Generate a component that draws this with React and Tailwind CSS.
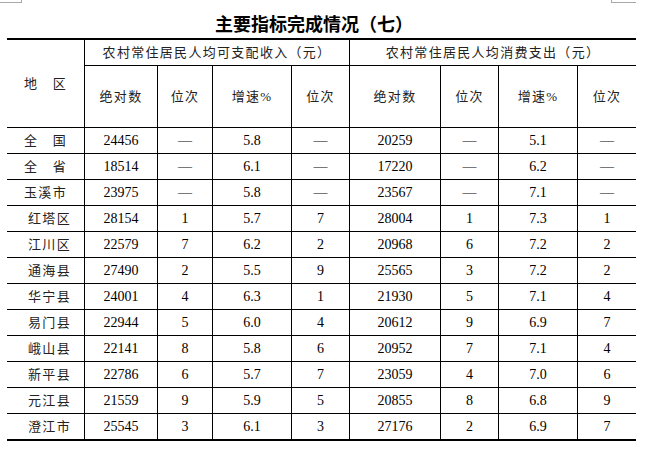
import React from 'react';

const cjk = "font-['Liberation_Serif','Noto_Sans_CJK_SC',serif]";

const rows = [
  ['全　国', '24456', '—', '5.8', '—', '20259', '—', '5.1', '—'],
  ['全　省', '18514', '—', '6.1', '—', '17220', '—', '6.2', '—'],
  ['玉溪市', '23975', '—', '5.8', '—', '23567', '—', '7.1', '—'],
  ['红塔区', '28154', '1', '5.7', '7', '28004', '1', '7.3', '1'],
  ['江川区', '22579', '7', '6.2', '2', '20968', '6', '7.2', '2'],
  ['通海县', '27490', '2', '5.5', '9', '25565', '3', '7.2', '2'],
  ['华宁县', '24001', '4', '6.3', '1', '21930', '5', '7.1', '4'],
  ['易门县', '22944', '5', '6.0', '4', '20612', '9', '6.9', '7'],
  ['峨山县', '22141', '8', '5.8', '6', '20952', '7', '7.1', '4'],
  ['新平县', '22786', '6', '5.7', '7', '23059', '4', '7.0', '6'],
  ['元江县', '21559', '9', '5.9', '5', '20855', '8', '6.8', '9'],
  ['澄江市', '25545', '3', '6.1', '3', '27176', '2', '6.9', '7'],
];

const subHeads = ['绝对数', '位次', '增速%', '位次', '绝对数', '位次', '增速%', '位次'];

export default function App() {
  return (
    <div className="w-[646px] h-[455px] bg-white text-black overflow-hidden">
      {/* page corner marks */}
      <div className="flex justify-between h-[3px]">
        <div className="w-[22px] h-[3px] border-b border-r border-[#a8a8a8]" />
        <div className="w-[25px] h-[3px] mr-[10px] border-b border-l border-[#a8a8a8]" />
      </div>

      {/* Title */}
      <div className="h-[35px] pt-[11px] pr-[18px] flex justify-center">
        <h1 className="text-[18px] leading-[18px] font-bold font-['Noto_Sans_CJK_SC',sans-serif]">
          主要指标完成情况（七）
        </h1>
      </div>

      {/* Table */}
      <div className={`ml-[7px] w-[629px] border-t-2 border-b-2 border-black ${cjk}`}>
        <div className="grid grid-cols-[77px_73px_55px_79px_58px_91px_58px_79px_59px] grid-rows-[25px_62px_repeat(12,26px)]">
          <div className="row-span-2 flex items-center justify-center text-[13px] text-[#222] tracking-[1.3px]">
            地　区
          </div>
          <div className="col-span-4 border-l border-black flex items-center justify-center text-[13px] text-[#222] tracking-[1.3px]">
            农村常住居民人均可支配收入（元）
          </div>
          <div className="col-span-4 border-l border-black flex items-center justify-center text-[13px] text-[#222] tracking-[1.3px]">
            农村常住居民人均消费支出（元）
          </div>
          {subHeads.map((h, i) => (
            <div key={i} className="border-l border-t border-black flex items-center justify-center text-[13px] text-[#222] tracking-[1.3px]">
              {h}
            </div>
          ))}

          {rows.map((row, r) =>
            row.map((cell, c) =>
              c === 0 ? (
                <div
                  key={`${r}-${c}`}
                  className={`border-t border-black flex items-center justify-center text-[13px] text-[#222] tracking-[1.3px] ${r > 2 ? 'pl-[8px]' : ''}`}
                >
                  {cell}
                </div>
              ) : (
                <div
                  key={`${r}-${c}`}
                  className="border-t border-l border-black flex items-center justify-center text-[14px] font-['Liberation_Serif',serif]"
                >
                  {cell}
                </div>
              )
            )
          )}
        </div>
      </div>
    </div>
  );
}
